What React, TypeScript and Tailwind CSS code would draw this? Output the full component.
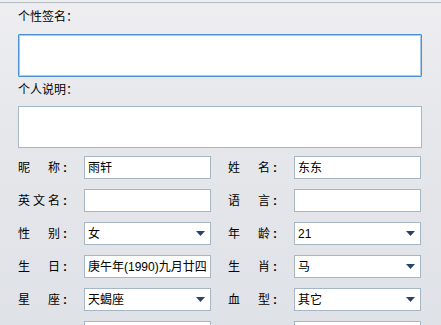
import React from "react";

const FONT = { fontFamily: '"Liberation Sans", "Noto Sans CJK SC", sans-serif' };

function Label({ chars }: { chars: string[] }) {
  return (
    <div className="flex w-[66px] shrink-0 items-center text-[12px] leading-[14px] text-black">
      {chars.length > 0 ? (
        <>
          <div className="flex w-[42px] justify-between">
            {chars.map((c, i) => (
              <span key={i}>{c}</span>
            ))}
          </div>
          <span className="ml-[3px] font-bold">:</span>
        </>
      ) : null}
    </div>
  );
}

function Arrow() {
  return (
    <svg width="9" height="5" viewBox="0 0 9 5" className="shrink-0">
      <polygon points="0,0 9,0 4.5,5" fill="#27456a" />
    </svg>
  );
}

function Field({ value, select }: { value?: React.ReactNode; select?: boolean }) {
  return (
    <div className="flex h-[23px] w-[127px] shrink-0 items-center justify-between border border-[#a7b6c5] bg-white pl-[3px] pr-[5px] text-[12px] leading-[14px] text-black">
      <span className="whitespace-nowrap">{value}</span>
      {select ? <Arrow /> : null}
    </div>
  );
}

function Row({
  l,
  lv,
  ls,
  r,
  rv,
  rs,
}: {
  l: string[];
  lv?: React.ReactNode;
  ls?: boolean;
  r: string[];
  rv?: React.ReactNode;
  rs?: boolean;
}) {
  return (
    <div className="flex h-[23px] items-center">
      <Label chars={l} />
      <Field value={lv} select={ls} />
      <div className="w-[17px] shrink-0" />
      <Label chars={r} />
      <Field value={rv} select={rs} />
    </div>
  );
}

export default function App() {
  return (
    <div
      className="h-[325px] w-[441px] overflow-hidden bg-[linear-gradient(180deg,#eeeef1_0%,#e6e7eb_40%,#dfe2e7_100%)]"
      style={FONT}
    >
      <div className="h-[2px]" />
      <div className="border-t border-[#b7bbc3]" />
      <div className="pl-[18px]">
        <div className="pt-[7px] text-[12px] leading-[14px] text-black">个性签名：</div>
        <div className="mt-[10px] h-[43px] w-[404px] rounded-[1px] border border-[#4a8fd1] bg-white shadow-[inset_0_0_0_1px_#a6ccee]" />
        <div className="mt-[6px] text-[12px] leading-[14px] text-black">个人说明：</div>
        <div className="mt-[9px] h-[42px] w-[404px] border border-[#a7b6c5] bg-white" />
        <div className="mt-[8px] flex flex-col gap-[10px]">
          <Row l={["昵", "称"]} lv="雨轩" r={["姓", "名"]} rv="东东" />
          <Row l={["英", "文", "名"]} r={["语", "言"]} />
          <Row l={["性", "别"]} lv="女" ls r={["年", "龄"]} rv="21" rs />
          <Row l={["生", "日"]} lv="庚午年(1990)九月廿四" r={["生", "肖"]} rv="马" rs />
          <Row l={["星", "座"]} lv="天蝎座" ls r={["血", "型"]} rv="其它" rs />
          <Row l={[]} r={[]} rs />
        </div>
      </div>
    </div>
  );
}
